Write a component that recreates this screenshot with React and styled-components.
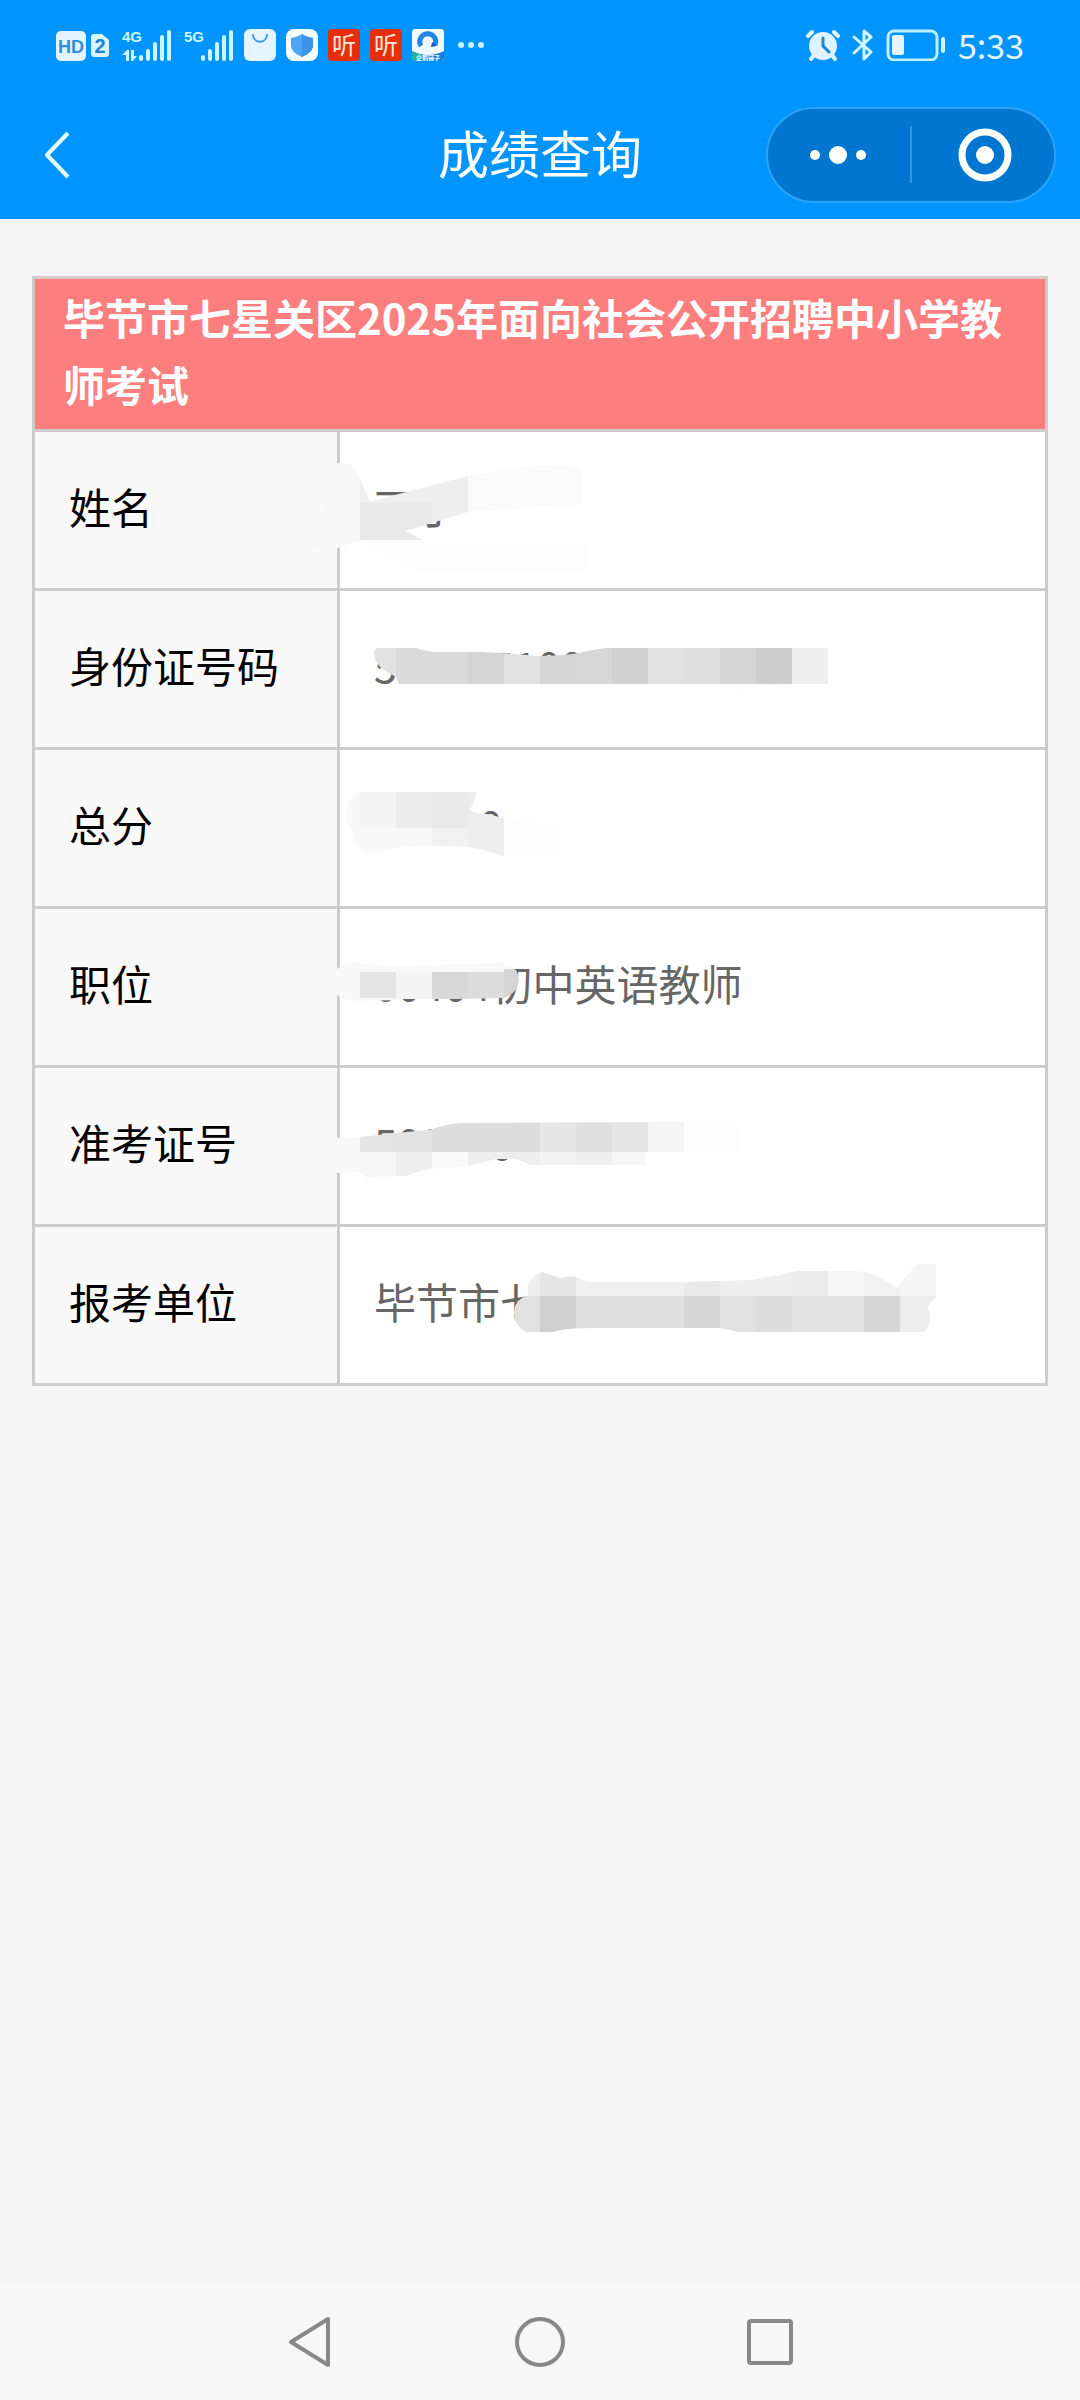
import styled, { createGlobalStyle } from "styled-components";

const GlobalStyle = createGlobalStyle`
  * {
    box-sizing: border-box;
  }
  body {
    margin: 0;
    background: #f5f5f5;
    font-family: "Noto Sans CJK SC", "Noto Sans", sans-serif;
  }
  button {
    padding: 0;
    border: none;
    background: none;
    color: inherit;
    cursor: pointer;
  }
  svg {
    display: block;
  }
`;

const Page = styled.div`
  min-height: 100vh;
  display: flex;
  flex-direction: column;
`;
const Header = styled.header`
  background: #0094ff;
  color: #fff;
`;
const StatusBar = styled.div`
  height: 90px;
  padding: 0 56px;
  display: flex;
  align-items: center;
  justify-content: space-between;
  color: #e4f6ff;
`;
const Group = styled.div`
  display: flex;
  align-items: center;
  gap: ${(props) => props.$gap}px;
`;
const Clock = styled.span`
  font-size: 34px;
  line-height: 40px;
`;
const TingIcon = styled.span`
  width: 32px;
  height: 32px;
  border-radius: 4px;
  background: #e62e0b;
  color: #ffe9d8;
  font-size: 24px;
  line-height: 30px;
  text-align: center;
`;
const NavBar = styled.div`
  height: 129px;
  padding: 0 24px 0 40px;
  display: grid;
  grid-template-columns: 1fr auto 1fr;
  align-items: center;
`;
const BackButton = styled.button`
  justify-self: start;
`;
const Title = styled.h1`
  margin: 0 16px 6px 0;
  font-size: 51px;
  font-weight: 400;
  line-height: 60px;
  justify-self: center;
`;
const Capsule = styled.div`
  justify-self: end;
  width: 290px;
  height: 96px;
  display: flex;
  align-items: center;
  border: 2px solid #2ba2f8;
  border-radius: 48px;
  background: #0076d0;
`;
const CapsuleButton = styled.button`
  flex: 1;
  height: 100%;
  display: flex;
  align-items: center;
  justify-content: center;
`;
const CapsuleLine = styled.span`
  width: 2px;
  height: 57px;
  background: #3195e0;
`;

const Main = styled.main`
  flex: 1;
  padding: 57px 32px;
`;
const Table = styled.table`
  width: 100%;
  table-layout: fixed;
  border-collapse: separate;
  border-spacing: 0;
  border: 3px solid #ccc;
  border-top: none;
  font-size: 42px;
`;
const LabelCol = styled.col`
  width: 305px;
`;
const TitleCell = styled.th`
  padding: 4px 28px 12px;
  border-top: 3px solid #d9c8c9;
  background: #fd7e7e;
  color: #fff;
  font-weight: 700;
  line-height: 67px;
  text-align: left;
`;
const LabelCell = styled.th`
  height: 159px;
  padding: 0 34px 8px;
  border-top: 3px solid #ccc;
  border-right: 3px solid #ccc;
  background: #f9f9f9;
  color: #000;
  font-weight: 400;
  line-height: 60px;
  text-align: left;
`;
const ValueCell = styled.td`
  padding: 0 34px 8px;
  border-top: 3px solid #ccc;
  background: #fff;
  color: #666;
  line-height: 60px;
`;
const Value = styled.div`
  position: relative;
  white-space: nowrap;
`;
/* smear painted over the private part of a value */
const MaskSvg = styled.svg`
  position: absolute;
  top: -44px;
  left: -74px;
  overflow: visible;
`;

const BottomBar = styled.nav`
  background: #f7f7f7;
`;
const BottomKeys = styled.div`
  width: 64%;
  height: 117px;
  margin: 0 auto;
  display: flex;
  align-items: center;
`;
const KeyButton = styled.button`
  flex: 1;
  height: 100%;
  display: flex;
  align-items: center;
  justify-content: center;
`;

/* tiles: [x, y, width, height, color] */
const rows = [
  {
    label: "姓名",
    value: "丁丁",
    outline:
      "M12 118V81L24 76V41Q28 31 40 31Q52 31 56 38L63 54L70 70L95 63L168 44L214 36Q260 31 281 34V73L168 80L105 99L123 108L128 112H289V141H120L72 118L60 108L38 116Z",
    tiles: [
      [12, 30, 50, 90, "#f8f8f8"],
      [60, 30, 12, 41, "#f8f8f8"],
      [60, 108, 230, 40, "#fdfdfd"],
      [60, 44, 72, 27, "#efefef"],
      [60, 71, 72, 37, "#e9e9e9"],
      [132, 36, 36, 56, "#eeeeee"],
      [168, 30, 46, 54, "#fbfbfb"],
      [214, 30, 72, 50, "#fcfbfb"],
    ],
  },
  {
    label: "身份证号码",
    value: "500005100000000000",
    outline:
      "M76 57H117Q125 61 140 61H179Q210 62 238 65Q260 65 279 62Q295 58 307 57H528V93H492L440 100L400 93H99L96 86Q88 82 80 76Q74 68 74 62Z",
    tiles: [
      [74, 57, 22, 30, "#e2e2e2"],
      [96, 57, 36, 36, "#dadada"],
      [132, 57, 36, 36, "#d9d9d9"],
      [168, 57, 36, 36, "#d4d4d4"],
      [204, 57, 36, 36, "#e1e1e1"],
      [240, 57, 36, 36, "#d5d5d5"],
      [276, 57, 36, 36, "#d7d7d7"],
      [312, 57, 36, 36, "#d1d1d1"],
      [348, 57, 36, 36, "#e1e1e1"],
      [384, 57, 36, 36, "#dedede"],
      [420, 57, 36, 36, "#d5d5d5"],
      [456, 57, 36, 36, "#cdcdcd"],
      [492, 57, 36, 36, "#eeeeee"],
      [400, 93, 92, 8, "#fdfdfd"],
    ],
  },
  {
    label: "总分",
    value: "000.00",
    outline:
      "M47 60Q49 43 63 42H176L175 48L170 60Q176 64 187 64L204 68L260 74V108L204 106L180 99Q165 96 147 96Q110 95 97 98L70 103Q60 101 57 97Q52 90 53 82Q48 76 47 70Z",
    tiles: [
      [46, 42, 14, 36, "#f9f9f9"],
      [60, 42, 36, 36, "#f4f4f4"],
      [96, 42, 36, 36, "#ececec"],
      [132, 42, 36, 36, "#e9e9e9"],
      [168, 42, 36, 36, "#ededed"],
      [46, 78, 50, 36, "#f9f9f9"],
      [96, 78, 36, 36, "#f8f8f8"],
      [132, 78, 36, 36, "#f1f1f1"],
      [168, 78, 36, 36, "#eeeeee"],
      [204, 66, 56, 42, "#fdfdfd"],
    ],
  },
  {
    label: "职位",
    value: "00404初中英语教师",
    outline:
      "M37 60Q44 54 55 54L90 57L202 54Q219 58 219 71Q218 84 204 89L53 92Q38 90 37 84Z",
    tiles: [
      [36, 54, 184, 9, "#f8f8f8"],
      [36, 63, 24, 30, "#f9f9f9"],
      [60, 63, 36, 26, "#e4e4e4"],
      [96, 63, 36, 27, "#f4f4f4"],
      [132, 63, 36, 27, "#d8d8d8"],
      [168, 63, 36, 27, "#dcdcdc"],
      [204, 60, 16, 30, "#d4d4d4"],
      [60, 89, 36, 4, "#f8f8f8"],
    ],
  },
  {
    label: "准考证号",
    value: "50000000000",
    outline:
      "M5 69L36 70L60 69L96 65L129 62Q145 56 162 55L382 54H440V84H346V97H230Q222 91 214 91H196L169 98L123 102L106 108L66 109L58 104L36 105H5Z",
    tiles: [
      [5, 66, 55, 44, "#f9f9f9"],
      [60, 54, 36, 30, "#e4e4e4"],
      [96, 54, 36, 30, "#e3e3e3"],
      [132, 54, 108, 30, "#dddddd"],
      [240, 54, 36, 30, "#e7e7e7"],
      [276, 54, 36, 30, "#dfdfdf"],
      [312, 54, 36, 30, "#e6e6e6"],
      [348, 54, 36, 30, "#f5f5f5"],
      [384, 54, 60, 30, "#fdfdfd"],
      [60, 84, 36, 30, "#f6f6f6"],
      [96, 84, 36, 30, "#eeeeee"],
      [132, 84, 36, 30, "#fafafa"],
      [168, 84, 72, 30, "#eeeeee"],
      [240, 84, 36, 30, "#f4f4f4"],
      [276, 84, 36, 30, "#efefef"],
      [312, 84, 36, 30, "#f7f7f7"],
    ],
  },
  {
    label: "报考单位",
    value: "毕节市七星关区",
    outline:
      "M228 68V58Q233 47 243 45L260 51Q272 48 277 50L287 55H384L451 53L480 48Q490 44 505 44L553 44Q566 44 573 48Q588 54 597 61L610 45Q615 37 621 37H636V71Q628 76 628 81Q632 90 628 99L624 105H439L420 101H296Q265 101 253 105H226Q214 98 214 86Q214 76 222 71Z",
    tiles: [
      [214, 36, 26, 33, "#eeeeee"],
      [240, 36, 36, 33, "#e6e6e6"],
      [276, 36, 108, 33, "#f0f0f0"],
      [384, 36, 36, 33, "#e9e9e9"],
      [420, 36, 72, 33, "#efefef"],
      [492, 36, 36, 33, "#ebebeb"],
      [528, 36, 36, 33, "#f6f6f6"],
      [564, 36, 36, 33, "#f1f1f1"],
      [600, 36, 36, 33, "#f5f5f5"],
      [214, 69, 26, 37, "#e1e1e1"],
      [240, 69, 36, 37, "#cfcfcf"],
      [276, 69, 108, 37, "#dfdfdf"],
      [384, 69, 36, 37, "#d6d6d6"],
      [420, 69, 36, 37, "#e1e1e1"],
      [456, 69, 36, 37, "#dddddd"],
      [492, 69, 72, 37, "#e2e2e2"],
      [564, 69, 36, 37, "#d6d6d6"],
      [600, 69, 36, 37, "#ededed"],
    ],
  },
];

const Mask = ({ id, outline, tiles }) => (
  <MaskSvg width="640" height="156" viewBox="0 0 640 156" aria-hidden="true">
    <clipPath id={id}>
      <path d={outline} />
    </clipPath>
    <g clipPath={`url(#${id})`} shapeRendering="crispEdges">
      {tiles.map(([x, y, width, height, fill]) => (
        <rect
          key={`${x}-${y}`}
          x={x}
          y={y}
          width={width}
          height={height}
          fill={fill}
        />
      ))}
    </g>
  </MaskSvg>
);

const narrow = {
  fontFamily: '"Liberation Sans Narrow", "Liberation Sans", sans-serif',
  fontWeight: 700,
};

const SimIcons = () => (
  <svg width="54" height="32" viewBox="0 0 54 32">
    <rect x="0" y="2" width="30" height="30" rx="5" fill="#e4f4ff" />
    <text x="15" y="24" fontSize="18" textAnchor="middle" fill="#2b8fdc" {...narrow}>
      HD
    </text>
    <path
      d="M38 5h8l7 6v14a3 3 0 0 1-3 3H38a3 3 0 0 1-3-3V8a3 3 0 0 1 3-3z"
      fill="#d8f4ff"
    />
    <text x="44" y="24" fontSize="20" textAnchor="middle" fill="#1683d8" {...narrow}>
      2
    </text>
  </svg>
);

const Signal = ({ type, arrows }) => (
  <svg width="50" height="32" viewBox="0 0 50 32" fill="#cbf6ff">
    <text x="0" y="13" fontSize="15" {...narrow}>
      {type}
    </text>
    {arrows && <path d="M0 26l5-5h2v11H4v-6zM9 21h3v6h3l-4 5H9z" />}
    <rect x="17" y="26" width="4" height="6" rx="2" />
    <rect x="24" y="20" width="4" height="12" rx="2" />
    <rect x="31" y="13" width="4" height="19" rx="2" />
    <rect x="38" y="6" width="4" height="26" rx="2" />
    <rect x="45" y="1" width="4" height="31" rx="2" />
  </svg>
);

const BagIcon = () => (
  <svg width="32" height="32" viewBox="0 0 32 32">
    <rect width="32" height="32" rx="6" fill="#e6f4ff" />
    <path d="M9 6c1 9 13 9 14 0" fill="none" stroke="#2f9be6" strokeWidth="2" strokeLinecap="round" />
  </svg>
);

const ShieldIcon = () => (
  <svg width="32" height="32" viewBox="0 0 32 32">
    <rect width="32" height="32" rx="8" fill="#f4fdff" />
    <path d="M16 5c4 3 7 3 11 4v7c0 6-5 9-11 12C10 25 5 22 5 16V9c4-1 7-1 11-4z" fill="#4da6f5" />
    <path d="M16 5c4 3 7 3 11 4v7c0 6-5 9-11 12z" fill="#3b93ea" />
  </svg>
);

const PenguinIcon = () => (
  <svg width="32" height="32" viewBox="0 0 32 32">
    <rect width="32" height="32" rx="3" fill="#f1fbff" />
    <path d="M0 22q16 8 32 0v7a3 3 0 0 1-3 3H3a3 3 0 0 1-3-3z" fill="#1a7fe0" />
    <path d="M0 22q8 4 12 4l-5 6H3a3 3 0 0 1-3-3z" fill="#22b3a4" />
    <path d="M9 17a8 8 0 1 1 14-1" fill="none" stroke="#2484e2" strokeWidth="5" />
    <path d="M20 13l5 4-6 1z" fill="#1c57c4" />
    <text x="16" y="31" fontSize="6" fontWeight="700" textAnchor="middle" fill="#fff">
      企鹅铺子
    </text>
  </svg>
);

const MoreDots = () => (
  <svg width="36" height="32" viewBox="0 0 36 32" fill="#c6f3ff">
    <circle cx="7" cy="16" r="3" />
    <circle cx="17" cy="16" r="3" />
    <circle cx="27" cy="16" r="3" />
  </svg>
);

const AlarmIcon = () => (
  <svg width="34" height="32" viewBox="0 0 34 32">
    <g stroke="#dcf5ff" strokeWidth="4" strokeLinecap="round">
      <path d="M2 7l4-4M32 7l-4-4M8 26l-3 4M26 26l3 4" />
    </g>
    <circle cx="17" cy="17" r="14" fill="#dff3ff" />
    <path d="M17 9v8l6 6" fill="none" stroke="#1c84d4" strokeWidth="3" strokeLinecap="round" strokeLinejoin="round" />
  </svg>
);

const BluetoothIcon = () => (
  <svg width="22" height="34" viewBox="0 0 22 34">
    <path
      d="M2 9l17 15-7 7V3l7 6L2 25"
      fill="none"
      stroke="#d0f5ff"
      strokeWidth="3"
      strokeLinecap="round"
      strokeLinejoin="round"
    />
  </svg>
);

const BatteryIcon = () => (
  <svg width="60" height="32" viewBox="0 0 60 32">
    <rect x="2" y="2" width="49" height="29" rx="6" fill="none" stroke="#bfeeff" strokeWidth="3" />
    <rect x="6" y="6" width="12" height="20" rx="2" fill="#e4f4ff" />
    <rect x="55" y="8" width="4" height="16" rx="2" fill="#d0f5ff" />
  </svg>
);

const App = () => {
  return (
    <Page>
      <GlobalStyle />
      <Header>
        <StatusBar>
          <Group $gap={10}>
            <Group $gap={12}>
              <SimIcons />
              <Signal type="4G" arrows />
              <Signal type="5G" />
            </Group>
            <BagIcon />
            <ShieldIcon />
            <TingIcon>听</TingIcon>
            <TingIcon>听</TingIcon>
            <PenguinIcon />
            <MoreDots />
          </Group>
          <Group $gap={12}>
            <AlarmIcon />
            <BluetoothIcon />
            <BatteryIcon />
            <Clock>5:33</Clock>
          </Group>
        </StatusBar>
        <NavBar>
          <BackButton type="button" aria-label="返回">
            <svg width="36" height="52" viewBox="0 0 36 52">
              <path d="M28 4L7 26l21 22" fill="none" stroke="#e6ffff" strokeWidth="4" strokeLinejoin="round" />
            </svg>
          </BackButton>
          <Title>成绩查询</Title>
          <Capsule>
            <CapsuleButton type="button" aria-label="更多">
              <svg width="60" height="24" viewBox="0 0 60 24" fill="#fff">
                <circle cx="6" cy="12" r="5" />
                <circle cx="29" cy="12" r="9" />
                <circle cx="52" cy="12" r="5" />
              </svg>
            </CapsuleButton>
            <CapsuleLine />
            <CapsuleButton type="button" aria-label="关闭">
              <svg width="58" height="54" viewBox="0 0 58 54">
                <circle cx="31" cy="27" r="23" fill="none" stroke="#fff" strokeWidth="7" />
                <circle cx="31" cy="27" r="9" fill="#fff" />
              </svg>
            </CapsuleButton>
          </Capsule>
        </NavBar>
      </Header>

      <Main>
        <Table>
          <colgroup>
            <LabelCol />
            <col />
          </colgroup>
          <thead>
            <tr>
              <TitleCell colSpan={2}>
                毕节市七星关区2025年面向社会公开招聘中小学教师考试
              </TitleCell>
            </tr>
          </thead>
          <tbody>
            {rows.map((row, index) => (
              <tr key={row.label}>
                <LabelCell scope="row">{row.label}</LabelCell>
                <ValueCell>
                  <Value>
                    {row.value}
                    <Mask id={`mask-${index}`} outline={row.outline} tiles={row.tiles} />
                  </Value>
                </ValueCell>
              </tr>
            ))}
          </tbody>
        </Table>
      </Main>

      <BottomBar>
        <BottomKeys>
          <KeyButton type="button" aria-label="返回">
            <svg width="46" height="54" viewBox="0 0 46 54">
              <path d="M41 4v46L4 27z" fill="none" stroke="#888" strokeWidth="4" strokeLinejoin="round" />
            </svg>
          </KeyButton>
          <KeyButton type="button" aria-label="主屏幕">
            <svg width="50" height="50" viewBox="0 0 50 50">
              <circle cx="25" cy="25" r="23" fill="none" stroke="#888" strokeWidth="4" />
            </svg>
          </KeyButton>
          <KeyButton type="button" aria-label="最近任务">
            <svg width="46" height="46" viewBox="0 0 46 46">
              <rect x="2" y="2" width="42" height="42" rx="2" fill="none" stroke="#888" strokeWidth="4" />
            </svg>
          </KeyButton>
        </BottomKeys>
      </BottomBar>
    </Page>
  );
};

export default App;
